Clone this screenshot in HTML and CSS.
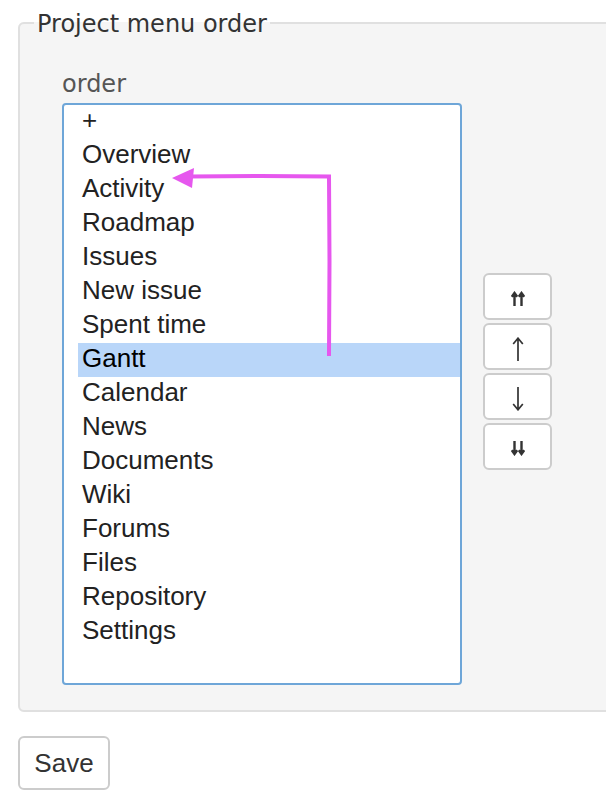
FILE: index.html
```html
<html>
<head>
    <link rel="stylesheet" href="styles.css">
</head>
<body>
<div class="page">
<form>
    <fieldset class="box">
        <legend>Project menu order</legend>
        <div class="tabular">
            <label class="orderLabel" for="order">order</label>
            <div class="row">
                <div class="listBox" id="order">
                    <div class="opt">+</div>
                    <div class="opt">Overview</div>
                    <div class="opt">Activity</div>
                    <div class="opt">Roadmap</div>
                    <div class="opt">Issues</div>
                    <div class="opt">New issue</div>
                    <div class="opt">Spent time</div>
                    <div class="opt selected">Gantt</div>
                    <div class="opt">Calendar</div>
                    <div class="opt">News</div>
                    <div class="opt">Documents</div>
                    <div class="opt">Wiki</div>
                    <div class="opt">Forums</div>
                    <div class="opt">Files</div>
                    <div class="opt">Repository</div>
                    <div class="opt">Settings</div>
                </div>
                <div class="moveButtons">
                    <button type="button" class="mBtn" title="top">
                        <svg width="14" height="15" viewBox="0 0 14 15"><path d="M3.5 15V2.5M10.5 15V2.5M0.8 5.8L3.5 2L6.2 5.8M7.8 5.8L10.5 2L13.2 5.8" fill="none" stroke="#333" stroke-width="2.4"/></svg>
                    </button>
                    <button type="button" class="mBtn" title="up">
                        <svg width="12" height="24" viewBox="0 0 12 24"><path d="M6 24V1.5M1.2 7L6 1.2L10.8 7" fill="none" stroke="#333" stroke-width="1.7"/></svg>
                    </button>
                    <button type="button" class="mBtn" title="down">
                        <svg width="12" height="24" viewBox="0 0 12 24"><path d="M6 0V22.5M1.2 17L6 22.8L10.8 17" fill="none" stroke="#333" stroke-width="1.7"/></svg>
                    </button>
                    <button type="button" class="mBtn" title="bottom">
                        <svg width="14" height="15" viewBox="0 0 14 15"><path d="M3.5 0V12.5M10.5 0V12.5M0.8 9.2L3.5 13L6.2 9.2M7.8 9.2L10.5 13L13.2 9.2" fill="none" stroke="#333" stroke-width="2.4"/></svg>
                    </button>
                </div>
            </div>
        </div>
        <!-- hand drawn arrow: Gantt goes up under Overview -->
        <svg class="scribble" width="606" height="400" viewBox="0 0 606 400">
            <path d="M329 353 L329.5 260 L329 175.5 L260 175 L192 175.5" fill="none" stroke="#e657ee" stroke-width="4" stroke-linecap="square"/>
            <path d="M172 177 L194 167 L192 187 Z" fill="#e657ee"/>
        </svg>
    </fieldset>
    <button type="submit" class="saveBtn">Save</button>
</form>
</div>
</body>
</html>
```

FILE: styles.css
```css
html {
    overflow: hidden;
}
body {
    margin: 0;
    background: #ffffff;
    font-family: "Liberation Sans", Arial, sans-serif;
}
.page {
    padding: 8px 0 0 18px;
}
.box {
    position: relative;
    width: 640px;
    margin: 0;
    padding: 0 0 25px 14px;
    border: 2px solid #e0e0e0;
    border-radius: 6px;
    background: #f5f5f5;
}
.box legend {
    padding: 2px 3px 0 3px;
    font-family: "DejaVu Sans", Verdana, sans-serif;
    font-size: 24px;
    line-height: 28px;
    color: #333;
}
.tabular {
    margin-left: 28px;
    padding-top: 32px;
}
.orderLabel {
    display: block;
    font-family: "DejaVu Sans", Verdana, sans-serif;
    font-size: 24px;
    line-height: 28px;
    color: #555;
    margin-bottom: 5px;
}
.row {
    display: flex;
    align-items: flex-start;
}
.listBox {
    width: 382px;
    height: 578px;
    padding: 0 0 0 14px;
    border: 2px solid #6ea6d8;
    border-radius: 4px;
    background: #ffffff;
}
.opt {
    height: 34px;
    line-height: 30px;
    padding-left: 4px;
    font-size: 26px;
    color: #222;
    white-space: nowrap;
}
.opt.selected {
    background: #b9d6f9;
    color: #000;
}
.moveButtons {
    display: flex;
    flex-direction: column;
    gap: 3px;
    margin-left: 21px;
    padding-top: 170px;
}
.mBtn {
    display: flex;
    align-items: center;
    justify-content: center;
    width: 69px;
    height: 47px;
    padding: 4px 0 0 0;
    border: 2px solid #cccccc;
    border-radius: 6px;
    background: #ffffff;
}
.scribble {
    position: absolute;
    left: -20px;
    top: -37px;
    pointer-events: none;
}
.saveBtn {
    margin-top: 24px;
    width: 92px;
    height: 54px;
    padding: 0;
    border: 2px solid #cccccc;
    border-radius: 6px;
    background: #ffffff;
    font-family: "Liberation Sans", Arial, sans-serif;
    font-size: 26px;
    color: #333;
}
```
